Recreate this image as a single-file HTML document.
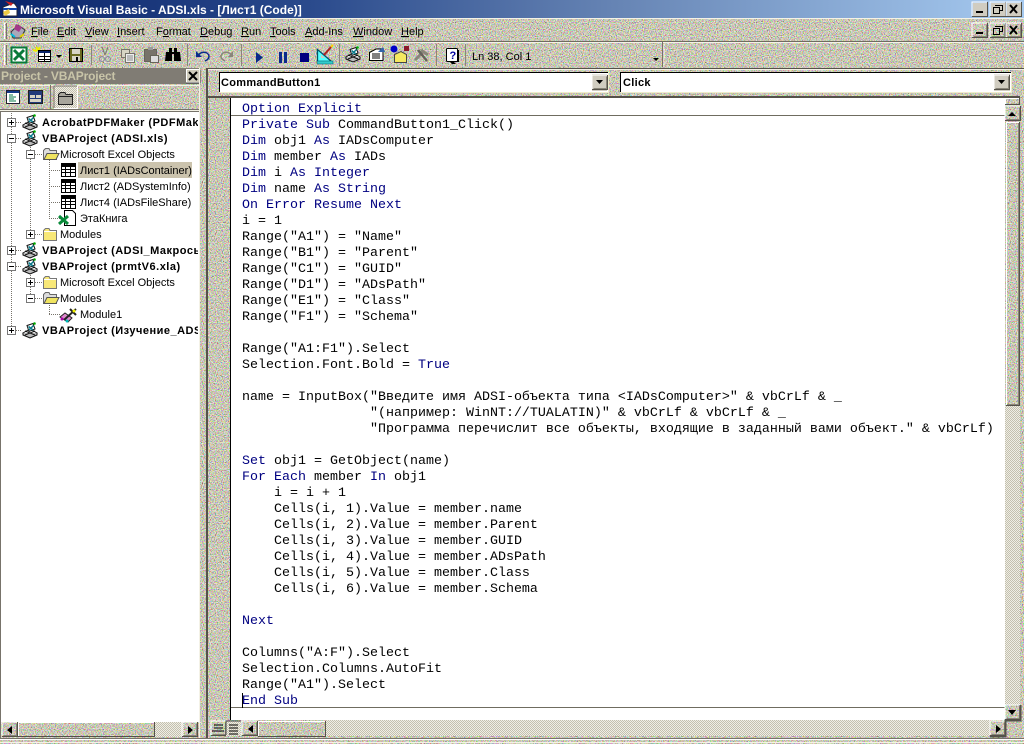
<!DOCTYPE html>
<html><head><meta charset="utf-8"><title>Microsoft Visual Basic - ADSI.xls</title>
<style>
html,body{margin:0;padding:0;width:1024px;height:744px;overflow:hidden;background:#d0ccc0}
svg{position:absolute;left:0;top:0}
svg text{font-family:"Liberation Sans","Noto Sans CJK JP",sans-serif;font-size:11px;fill:#000}
.b{font-weight:bold;letter-spacing:.5px}
.c{font-weight:bold;letter-spacing:.3px}
pre{position:absolute;left:242px;top:102px;margin:0;font:13.33px/16px "Liberation Mono",monospace;color:#000;white-space:pre}
pre b{font-weight:normal;color:#000080}
</style></head><body>
<svg width="1024" height="744" viewBox="0 0 1024 744">
<defs>
<linearGradient id="tg" x1="0" x2="1" y1="0" y2="0"><stop offset="0" stop-color="#0a246a"/><stop offset=".3" stop-color="#2a4a8c"/><stop offset=".6" stop-color="#6684b4"/><stop offset="1" stop-color="#a6caf0"/></linearGradient>
<filter id="nz" x="0" y="0" width="100%" height="100%" color-interpolation-filters="sRGB"><feTurbulence type="fractalNoise" baseFrequency="0.85" numOctaves="2" seed="4"/><feColorMatrix values="2.5 0 0 0 -.45  0 2.5 0 0 -.45  0 0 2.5 0 -.55  0 0 0 0 .6"/></filter>
<pattern id="ck" width="2" height="2" patternUnits="userSpaceOnUse"><rect width="2" height="2" fill="#efeee6"/><rect width="1" height="1" fill="#c4c0ae"/><rect x="1" y="1" width="1" height="1" fill="#c4c0ae"/></pattern>
<clipPath id="tc"><rect x="0" y="113" width="198" height="609"/></clipPath>
<symbol id="btn" width="16" height="15" overflow="visible"><path d="M0 14V0H15" fill="none" stroke="#fff"/><path d="M15.5 0V14.5H0" fill="none" stroke="#55524a"/><path d="M14.5 1.5V13.5H1.5" fill="none" stroke="#8a867a"/></symbol>
<symbol id="proj" width="18" height="16" overflow="visible"><path d="M1 11L8 7L15 11L8 15Z" fill="#fff" stroke="#111"/><path d="M1 11V13L8 16L15 13V11" fill="#bbb" stroke="#111"/><path d="M5 3.500L11 1.500L13 7L7 9.500Z" fill="#fff" stroke="#111"/><path d="M6.500 4.500L11 8M11.500 3.500L7 8" stroke="#0a7a8a" stroke-width="1.500"/><circle cx="12.500" cy="1.500" r="1.300" fill="#0a0"/><path d="M3 9L13 13M13 9L3 13" stroke="#111"/></symbol>
<symbol id="fold" width="16" height="14" overflow="visible"><path d="M1.500 3.500L3.500 1.500H7L8 3.500H14.500V13.500H1.500Z" fill="#f8e878" stroke="#777"/><path d="M2 4.500H14" stroke="#fff"/></symbol>
<symbol id="fopen" width="18" height="14" overflow="visible"><path d="M1.500 3.500L3.500 1.500H7L8 3.500H14.500V12.500H1.500Z" fill="#ddd" stroke="#666"/><path d="M2 12.500L5 6.500H17L14 12.500Z" fill="#f0e460" stroke="#555"/></symbol>
<symbol id="sheet" width="16" height="14" overflow="visible"><rect x="1.500" y=".5" width="14" height="13" fill="#fff" stroke="#000"/><rect x="1" y="1" width="15" height="3" fill="#000"/><path d="M5.500 1V14M10.500 1V14M1 6.500H16M1 9.500H16" stroke="#000"/></symbol>
<symbol id="plus" width="9" height="9" overflow="visible"><rect x=".5" y=".5" width="8" height="8" fill="#fff" stroke="#777"/><path d="M2 4.500H7M4.500 2V7" stroke="#000"/></symbol>
<symbol id="minus" width="9" height="9" overflow="visible"><rect x=".5" y=".5" width="8" height="8" fill="#fff" stroke="#777"/><path d="M2 4.500H7" stroke="#000"/></symbol>
</defs>

<!-- base -->
<rect width="1024" height="744" fill="#d0ccc0"/>
<rect width="1024" height="744" filter="url(#nz)"/>

<!-- title bar -->
<rect x="0" y="0" width="1024" height="18" fill="url(#tg)"/>
<rect x="0" y="18" width="1024" height="1" fill="#f4f2e6"/>
<path d="M3 7L14 3L17 7V16H3Z" fill="#fff" stroke="#223"/><path d="M3 9H17" stroke="#14a" stroke-width="2"/><path d="M5 1L13 3L11 6Z" fill="#c22"/><path d="M3 12L9 9L10 13L5 16Z" fill="#ec4"/>
<text x="20" y="14" style="fill:#fff;font-size:12px;font-weight:bold">Microsoft Visual Basic - ADSI.xls - [Лист1 (Code)]</text>
<use href="#btn" x="972" y="2"/><use href="#btn" x="990" y="2"/><use href="#btn" x="1006" y="2"/>
<g fill="#d0ccc0"><rect x="973" y="3" width="14" height="13"/><rect x="991" y="3" width="14" height="13"/><rect x="1007" y="3" width="14" height="13"/></g>
<rect x="976" y="11" width="7" height="2" fill="#000"/>
<path d="M995.500 5.500H1002.500V10.500H1000M993.500 7.500H999.500V13.500H993.500Z" fill="none" stroke="#000"/><path d="M995 5.500H1003M993 7.500H1000" stroke="#000"/>
<path d="M1010 5L1017 13M1017 5L1010 13" stroke="#000" stroke-width="2"/>

<!-- menu bar -->
<path d="M4.500 23V39" stroke="#fff"/><path d="M6.500 23V39" stroke="#77736a"/>
<path d="M11 32L18 25L25 30L21 38H13Z" fill="#aaa8b8" stroke="#333"/><path d="M16 24L22 27L19 32L14 29Z" fill="#a33a8a"/><path d="M11 34L15 37" stroke="#0bd" stroke-width="2"/><path d="M24 34L20 37" stroke="#dc0" stroke-width="2"/>
<g>
<text x="31" y="35"><tspan text-decoration="underline">F</tspan>ile</text>
<text x="57" y="35"><tspan text-decoration="underline">E</tspan>dit</text>
<text x="85" y="35"><tspan text-decoration="underline">V</tspan>iew</text>
<text x="117" y="35"><tspan text-decoration="underline">I</tspan>nsert</text>
<text x="156" y="35">F<tspan text-decoration="underline">o</tspan>rmat</text>
<text x="200" y="35"><tspan text-decoration="underline">D</tspan>ebug</text>
<text x="241" y="35"><tspan text-decoration="underline">R</tspan>un</text>
<text x="270" y="35"><tspan text-decoration="underline">T</tspan>ools</text>
<text x="305" y="35"><tspan text-decoration="underline">A</tspan>dd-Ins</text>
<text x="353" y="35"><tspan text-decoration="underline">W</tspan>indow</text>
<text x="401" y="35"><tspan text-decoration="underline">H</tspan>elp</text>
</g>
<use href="#btn" x="972" y="23"/><use href="#btn" x="990" y="23"/><use href="#btn" x="1006" y="23"/>
<rect x="976" y="32" width="7" height="2" fill="#000"/>
<path d="M995.500 26.500H1002.500V31.500H1000M993.500 28.500H999.500V34.500H993.500Z" fill="none" stroke="#000"/><path d="M995 26.500H1003M993 28.500H1000" stroke="#000"/>
<path d="M1010 26L1017 34M1017 26L1010 34" stroke="#000" stroke-width="2"/>
<rect x="0" y="41" width="1024" height="1" fill="#6f6c60"/>
<rect x="0" y="42" width="1024" height="1" fill="#f4f2e6"/>

<!-- toolbar -->
<path d="M4.500 45V65" stroke="#fff"/><path d="M6.500 45V65" stroke="#77736a"/>
<rect x="11.500" y="47.500" width="15" height="15" fill="#fff" stroke="#0a7a3a" stroke-width="2"/><path d="M14 50L24 60M24 50L14 60" stroke="#0a7a3a" stroke-width="3"/>
<path d="M36 47L39 51M33 50L37 51M40 47L38 51" stroke="#ee0" stroke-width="2"/><rect x="38.500" y="50.500" width="12" height="11" fill="#fff" stroke="#000"/><rect x="39" y="51" width="11" height="2" fill="#0a246a"/><path d="M44.500 53V61M39 56.500H50M39 59.500H50" stroke="#000"/>
<path d="M56 55H62L59 58Z" fill="#000"/>
<rect x="69.500" y="48.500" width="13" height="13" fill="#6a6a20" stroke="#000"/><rect x="72" y="49" width="8" height="5" fill="#d8d4c4"/><rect x="72" y="56" width="8" height="5" fill="#d8d4c4"/><rect x="76" y="57" width="2" height="4" fill="#000"/>
<path d="M91.500 45V65" stroke="#8a867a"/>
<path d="M102 47L105 55M108 47L105 55" stroke="#77736a" fill="none"/><circle cx="102" cy="59" r="2.500" fill="none" stroke="#8a8a9a"/><circle cx="108" cy="59" r="2.500" fill="none" stroke="#8a8a9a"/>
<rect x="121.500" y="49.500" width="8" height="8" fill="#d8d4c4" stroke="#77736a"/><rect x="125.500" y="53.500" width="9" height="9" fill="#eee" stroke="#77736a"/><path d="M127 56H133M127 58H133M127 60H133" stroke="#888"/>
<rect x="144.500" y="49.500" width="12" height="12" fill="#77736a" stroke="#66645a"/><rect x="148" y="47" width="5" height="3" fill="#999"/><rect x="150.500" y="55.500" width="8" height="7" fill="#ddd" stroke="#66645a"/>
<path d="M169 48V52H166L165 61H172V54H174V61H181L180 52H177V48H174V52H172V48Z" fill="#000"/>
<path d="M187.500 44V66" stroke="#8a867a"/>
<path d="M198 56C200 51 208 51 209 56C209 59 207 60 205 61" fill="none" stroke="#0a2a8a" stroke-width="1.500"/><path d="M196 51V57H202Z" fill="#0a2a8a"/>
<path d="M232 56C230 51 222 51 221 56C221 59 223 60 225 61" fill="none" stroke="#8a867a" stroke-width="1.500"/><path d="M233 51V57H228Z" fill="#8a867a"/>
<path d="M241.500 44V66" stroke="#8a867a"/>
<path d="M256 52V63L263 57.500Z" fill="#0a2a8a"/>
<rect x="279" y="52" width="3" height="11" fill="#0a2a8a"/><rect x="284" y="52" width="3" height="11" fill="#0a2a8a"/>
<rect x="300" y="53" width="9" height="9" fill="#000080"/>
<path d="M317.500 49.500V61.500H331.500Z" fill="#5ff" stroke="#056" stroke-width="1.300"/><path d="M321 58V55L325 58Z" fill="#d0ccbc"/><rect x="317" y="61" width="16" height="3" fill="#3cc" stroke="#056" stroke-width=".5"/><path d="M324 55L331 47" stroke="#a22" stroke-width="2"/><path d="M331 47L333 45" stroke="#fc0" stroke-width="2"/>
<path d="M339.500 44V66" stroke="#8a867a"/>
<use href="#proj" x="345" y="46"/>
<path d="M369.500 52.500L376 49H383V60.500H369.500Z" fill="#fff" stroke="#000"/><path d="M372 54H380M372 56H380M372 58H380" stroke="#000"/><path d="M378 52L383 47L385 52Z" fill="#36a"/>
<circle cx="394" cy="49" r="3.500" fill="#0000c8"/><rect x="404" y="46" width="5" height="5" fill="#8a1a2a"/><path d="M394.500 54.500L401 51.500L406.500 54.500V62.500H394.500Z" fill="#f4e860" stroke="#444"/>
<path d="M415 60L424 51M421 50L428 55" stroke="#8a867a" stroke-width="3"/><path d="M427 61L418 50" stroke="#65635c" stroke-width="2.500"/>
<path d="M436.500 44V66" stroke="#8a867a"/>
<rect x="446.500" y="48.500" width="11" height="13" rx="1" fill="#fff" stroke="#000"/><rect x="457" y="50" width="2" height="12" fill="#000"/><path d="M450 62H454L456 64H452Z" fill="#000"/>
<text x="449.500" y="59" style="fill:#0000a0;font-size:11px;font-weight:bold">?</text>
<path d="M465.500 44V66" stroke="#8a867a"/>
<text x="472" y="60">Ln 38, Col 1</text>
<path d="M653 58H659L656 61Z" fill="#000"/>
<path d="M662.500 42V67" stroke="#77736a"/>
<path d="M664 42V67" stroke="#fff" opacity=".6"/>

<!-- project pane -->
<rect x="0" y="68" width="200" height="16" fill="#807c74"/>
<text x="1" y="80" style="fill:#c8c4a8;font-size:12px;font-weight:bold;letter-spacing:-.15px">Project - VBAProject</text>
<rect x="186.500" y="69.500" width="13" height="13" fill="#d0ccbc" stroke="#fff"/><path d="M200 69.500V83H186" fill="none" stroke="#444"/>
<path d="M189 72L197 80M197 72L189 80" stroke="#000" stroke-width="2"/>
<path d="M0 85.500H200" stroke="#f4f2e6"/>
<path d="M0 109.500H200" stroke="#77736a"/><path d="M0 110.500H200" stroke="#f4f2e6"/>
<path d="M199.500 85V110" stroke="#77736a"/>
<rect x="6.500" y="90.500" width="13" height="13" fill="#fff" stroke="#223"/><rect x="7" y="91" width="12" height="2" fill="#123a8a"/><path d="M9 95H13M9 97H16M9 99H14M9 101H16" stroke="#0a7a4a"/>
<rect x="28.500" y="90.500" width="14" height="13" fill="#223a7a" stroke="#222"/><rect x="30" y="95" width="5" height="3" fill="#d8d4c4"/><rect x="36" y="95" width="5" height="3" fill="#d8d4c4"/><rect x="30" y="99" width="11" height="3" fill="#d8d4c4"/>
<path d="M50.500 85V110" stroke="#77736a"/>
<rect x="54" y="86" width="23" height="22" fill="url(#ck)"/><path d="M54 108V86H77" fill="none" stroke="#77736a"/><path d="M77.500 86V108.500H54" fill="none" stroke="#fff"/>
<path d="M58.500 94.500L60.500 92.500H65L66 94.500H72.500V104.500H58.500Z" fill="#a8a69c" stroke="#222"/><path d="M59 96.500H72" stroke="#222"/>

<!-- tree -->
<rect x="0" y="111" width="199" height="1" fill="#77736a"/>
<rect x="0" y="112" width="1" height="626" fill="#77736a"/>
<rect x="1" y="112" width="198" height="610" fill="#fff"/>
<g clip-path="url(#tc)">
<g stroke="#77736a" stroke-dasharray="1 1" fill="none">
<path d="M11.500 113V330M30.500 143V234M30.500 271V298M49.500 160V218M49.500 303V314"/>
<path d="M16 122.500H22M16 138.500H22M16 250.500H22M16 266.500H22M16 330.500H22M35 154.500H42M35 234.500H42M35 282.500H42M35 298.500H42M49 170.500H60M49 186.500H60M49 202.500H60M49 218.500H60M49 314.500H60"/>
</g>
<rect x="78" y="162" width="114" height="16" fill="#cbc3ad"/>
<use href="#plus" x="7" y="118"/><use href="#minus" x="7" y="134"/><use href="#plus" x="7" y="246"/><use href="#minus" x="7" y="262"/><use href="#plus" x="7" y="326"/>
<use href="#minus" x="26" y="150"/><use href="#plus" x="26" y="230"/><use href="#plus" x="26" y="278"/><use href="#minus" x="26" y="294"/>
<use href="#proj" x="22" y="114"/><use href="#proj" x="22" y="130"/><use href="#proj" x="22" y="242"/><use href="#proj" x="22" y="258"/><use href="#proj" x="22" y="322"/>
<use href="#fopen" x="42" y="147"/><use href="#fold" x="42" y="227"/><use href="#fold" x="42" y="275"/><use href="#fopen" x="42" y="291"/>
<use href="#sheet" x="60" y="163"/><use href="#sheet" x="60" y="179"/><use href="#sheet" x="60" y="195"/>
<path d="M64.500 210.500H72.500L75.500 213.500V225.500H64.500Z" fill="#fff" stroke="#000"/><path d="M59 216L68 224M68 216L59 224" stroke="#0a8a3a" stroke-width="3"/>
<path d="M60 317L65 313L72 318L68 322Z" fill="#d8c" stroke="#222"/><path d="M64 320L76 309M70 309L76 315" stroke="#222" stroke-width="2"/><circle cx="74" cy="311" r="1.500" fill="#ee0"/><circle cx="67" cy="321" r="1.500" fill="#0bb"/><circle cx="62" cy="319" r="1.500" fill="#a0a"/>
<text x="42" y="126" class="b">AcrobatPDFMaker (PDFMaker...</text>
<text x="42" y="142" class="b">VBAProject (ADSI.xls)</text>
<text x="60" y="158">Microsoft Excel Objects</text>
<text x="80" y="174">Лист1 (IADsContainer)</text>
<text x="80" y="190">Лист2 (ADSystemInfo)</text>
<text x="80" y="206">Лист4 (IADsFileShare)</text>
<text x="80" y="222">ЭтаКнига</text>
<text x="60" y="238">Modules</text>
<text x="42" y="254" class="b">VBAProject (ADSI_Макросы.xls)</text>
<text x="42" y="270" class="b">VBAProject (prmtV6.xla)</text>
<text x="60" y="286">Microsoft Excel Objects</text>
<text x="60" y="302">Modules</text>
<text x="80" y="318">Module1</text>
<text x="42" y="334" class="b">VBAProject (Изучение_ADSI.xls)</text>
</g>
<!-- tree hscroll -->
<rect x="154" y="722" width="30" height="15" fill="url(#ck)"/>
<use href="#btn" x="2" y="722"/><path d="M12 726V734L7 730Z" fill="#000"/>
<path d="M18.500 736V722.500H154" fill="none" stroke="#fff"/><path d="M154.500 722V736.500H18" fill="none" stroke="#55524a"/>
<use href="#btn" x="182" y="722"/><path d="M188 726V734L193 730Z" fill="#000"/>
<rect x="0" y="738" width="1024" height="1" fill="#77736a"/>
<rect x="0" y="739" width="1024" height="1" fill="#fff"/>
<rect x="0" y="742" width="1024" height="1" fill="#f4f2e6"/>

<!-- splitter edge -->
<rect x="199" y="68" width="1" height="670" fill="#f4f2e6"/>
<rect x="206" y="68" width="2" height="670" fill="#55524a"/>
<rect x="208" y="69" width="816" height="1" fill="#f4f2e6"/>
<rect x="206" y="68" width="818" height="1" fill="#55524a"/>

<!-- combos -->
<rect x="219" y="72" width="389" height="20" fill="#fff"/>
<path d="M219.500 92V72.500H608" fill="none" stroke="#000"/><path d="M608.500 72V92.500H219" fill="none" stroke="#efeccc"/>
<rect x="592" y="74" width="15" height="17" fill="#d0ccc0"/><use href="#btn" x="592" y="75"/><path d="M596 80H603L599.500 84Z" fill="#000"/>
<text x="221" y="86" class="c">CommandButton1</text>
<rect x="620" y="72" width="391" height="20" fill="#fff"/>
<path d="M620.500 92V72.500H1011" fill="none" stroke="#000"/><path d="M1011.500 72V92.500H620" fill="none" stroke="#efeccc"/>
<rect x="994" y="74" width="16" height="17" fill="#d0ccc0"/><use href="#btn" x="994" y="75"/><path d="M998 80H1005L1001.500 84Z" fill="#000"/>
<text x="623" y="86" class="c">Click</text>

<!-- code area -->
<rect x="208" y="96" width="812" height="2" fill="#55524a"/>
<rect x="231" y="98" width="774" height="622" fill="#fff"/>
<rect x="230" y="98" width="1" height="622" fill="#000"/>
<rect x="231" y="115" width="774" height="1" fill="#6f6c60"/>
<rect x="231" y="707" width="774" height="1" fill="#6f6c60"/>
<rect x="242" y="693" width="1" height="15" fill="#000"/>

<!-- vscroll -->
<rect x="1005" y="405" width="15" height="300" fill="url(#ck)"/>
<path d="M1005.500 105V98.500H1019" fill="none" stroke="#fff"/><path d="M1019.500 98V104.500H1005" fill="none" stroke="#55524a"/>
<use href="#btn" x="1005" y="106"/><path d="M1008 116H1016L1012 112Z" fill="#000"/>
<path d="M1006.500 405V122.500H1019" fill="none" stroke="#fff"/><path d="M1019.500 122V405.500H1006" fill="none" stroke="#55524a"/><path d="M1018.500 123V404.500H1007" fill="none" stroke="#8a867a"/>
<use href="#btn" x="1005" y="705"/><path d="M1008 710H1016L1012 715Z" fill="#000"/>

<!-- code hscroll -->
<rect x="326" y="720" width="664" height="16" fill="url(#ck)"/>
<use href="#btn" x="211" y="721"/><path d="M214 725H223M214 728H223M212 731H224" stroke="#000"/>
<rect x="226" y="721" width="15" height="15" fill="url(#ck)"/><path d="M226 735V721H241" fill="none" stroke="#444"/><path d="M229 725H238M229 728H238M229 731H238M229 734H238" stroke="#000"/>
<use href="#btn" x="242" y="721"/><path d="M253 725V733L248 729Z" fill="#000"/>
<path d="M258.500 736V721.500H325" fill="none" stroke="#fff"/><path d="M325.500 721V736.500H258" fill="none" stroke="#55524a"/>
<use href="#btn" x="990" y="721"/><path d="M996 725V733L1001 729Z" fill="#000"/>
<path d="M1020.500 705V720.500H1005.500V736.500H990" fill="none" stroke="#55524a" stroke-width="2"/>
</svg>
<pre><b>Option Explicit</b>
<b>Private Sub</b> CommandButton1_Click()
<b>Dim</b> obj1 <b>As</b> IADsComputer
<b>Dim</b> member <b>As</b> IADs
<b>Dim</b> i <b>As</b> <b>Integer</b>
<b>Dim</b> name <b>As</b> <b>String</b>
<b>On Error Resume Next</b>
i = 1
Range("A1") = "Name"
Range("B1") = "Parent"
Range("C1") = "GUID"
Range("D1") = "ADsPath"
Range("E1") = "Class"
Range("F1") = "Schema"

Range("A1:F1").Select
Selection.Font.Bold = <b>True</b>

name = InputBox("Введите имя ADSI-объекта типа &lt;IADsComputer&gt;" &amp; vbCrLf &amp; _
                "(например: WinNT://TUALATIN)" &amp; vbCrLf &amp; vbCrLf &amp; _
                "Программа перечислит все объекты, входящие в заданный вами объект." &amp; vbCrLf)

<b>Set</b> obj1 = GetObject(name)
<b>For Each</b> member <b>In</b> obj1
    i = i + 1
    Cells(i, 1).Value = member.name
    Cells(i, 2).Value = member.Parent
    Cells(i, 3).Value = member.GUID
    Cells(i, 4).Value = member.ADsPath
    Cells(i, 5).Value = member.Class
    Cells(i, 6).Value = member.Schema

<b>Next</b>

Columns("A:F").Select
Selection.Columns.AutoFit
Range("A1").Select
<b>End Sub</b></pre>
</body></html>
